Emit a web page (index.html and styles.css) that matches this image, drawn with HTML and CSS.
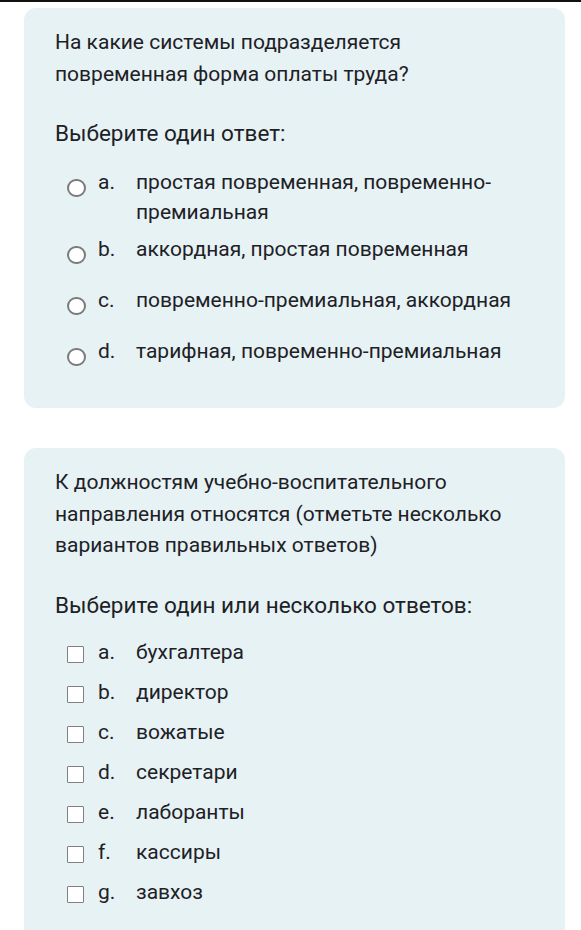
FILE: index.html
```html
<!DOCTYPE html>
<html lang="ru">
<head>
<meta charset="utf-8">
<title>Вопросы</title>
<link rel="stylesheet" href="styles.css">
</head>
<body>
<div class="topbar"></div>
<main class="page">
  <section class="card">
    <div class="qtext">На какие системы подразделяется<br>повременная форма оплаты труда?</div>
    <div class="prompt">Выберите один ответ:</div>
    <div class="answers">
      <div class="row radio-row"><span class="radio"></span><span class="letter">a.</span><span class="label">простая повременная, повременно-<br>премиальная</span></div>
      <div class="row radio-row"><span class="radio"></span><span class="letter">b.</span><span class="label">аккордная, простая повременная</span></div>
      <div class="row radio-row"><span class="radio"></span><span class="letter">c.</span><span class="label">повременно-премиальная, аккордная</span></div>
      <div class="row radio-row"><span class="radio"></span><span class="letter">d.</span><span class="label">тарифная, повременно-премиальная</span></div>
    </div>
  </section>
  <section class="card">
    <div class="qtext">К должностям учебно-воспитательного<br>направления относятся (отметьте несколько<br>вариантов правильных ответов)</div>
    <div class="prompt">Выберите один или несколько ответов:</div>
    <div class="answers answers-check">
      <div class="row check-row"><span class="check"></span><span class="letter">a.</span><span class="label">бухгалтера</span></div>
      <div class="row check-row"><span class="check"></span><span class="letter">b.</span><span class="label">директор</span></div>
      <div class="row check-row"><span class="check"></span><span class="letter">c.</span><span class="label">вожатые</span></div>
      <div class="row check-row"><span class="check"></span><span class="letter">d.</span><span class="label">секретари</span></div>
      <div class="row check-row"><span class="check"></span><span class="letter">e.</span><span class="label">лаборанты</span></div>
      <div class="row check-row"><span class="check"></span><span class="letter">f.</span><span class="label">кассиры</span></div>
      <div class="row check-row"><span class="check"></span><span class="letter">g.</span><span class="label">завхоз</span></div>
    </div>
  </section>
</main>
</body>
</html>
```
FILE: styles.css
```css
html, body {
  margin: 0;
  padding: 0;
  background: #ffffff;
}
body {
  font-family: Roboto, "Noto Sans", "Liberation Sans", sans-serif;
  color: #1d2125;
  overflow: hidden;
}
.topbar {
  height: 1.5px;
  background: #111;
}
.page {
  padding: 6.5px 16px 0 24px;
  display: flex;
  flex-direction: column;
  gap: 40px;
}
.card {
  background: #e7f2f5;
  border-radius: 12px;
  padding: 19px 20px 27px 31px;
}
.qtext {
  font-size: 21px;
  line-height: 31.5px;
  white-space: nowrap;
}
.prompt {
  font-size: 22.5px;
  line-height: 30px;
  margin-top: 28px;
}
.answers {
  margin-top: 13px;
  padding-left: 12px;
}
.answers-check {
  margin-top: 12px;
}
.row {
  display: flex;
  align-items: flex-start;
  font-size: 21px;
  line-height: 30px;
  box-sizing: border-box;
}
.radio-row {
  min-height: 51px;
  padding: 5.5px 0 1.5px;
}
.check-row {
  min-height: 40px;
  padding: 5px 0;
}
.radio {
  flex: none;
  width: 18.5px;
  height: 18.5px;
  box-sizing: border-box;
  border: 2px solid #7b7b7b;
  border-radius: 50%;
  background: #fff;
  margin-top: 12.25px;
  margin-right: 12.5px;
}
.check {
  flex: none;
  width: 17px;
  height: 16.5px;
  box-sizing: border-box;
  border: 1.5px solid #808080;
  border-radius: 1px;
  background: #fff;
  margin-top: 9.5px;
  margin-right: 14px;
}
.letter {
  flex: none;
  width: 38px;
}
.label {
  flex: 1;
  white-space: nowrap;
}
```
